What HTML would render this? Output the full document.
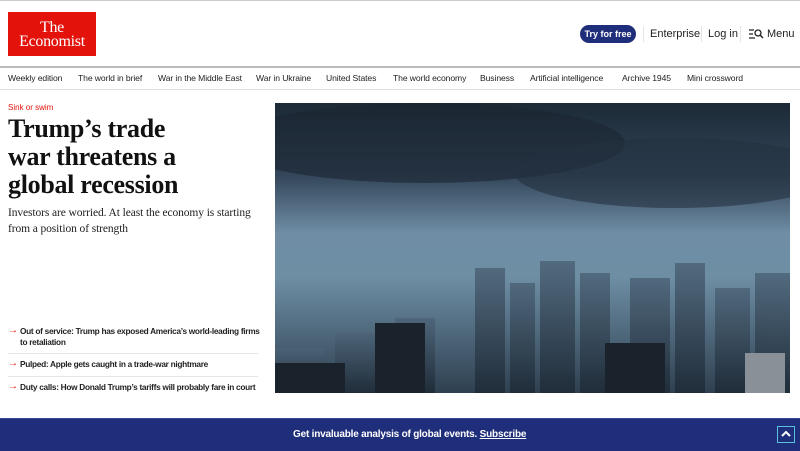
<!DOCTYPE html>
<html><head><style>
*{margin:0;padding:0;box-sizing:border-box}
body{width:800px;height:451px;overflow:hidden;background:#fff;font-family:"Liberation Sans",sans-serif;position:relative}
.top{position:absolute;top:0;left:0;width:800px;height:1px;background:#ccc}
.logo{position:absolute;left:8px;top:12px;width:88px;height:44px;background:#e3120b;color:#fff;font-family:"Liberation Serif",serif;font-size:16px;line-height:14px;text-align:center;padding-top:9px;letter-spacing:-0.3px}
.hdr{position:absolute;top:28px;font-size:11px;line-height:12px;color:#222}
.try{position:absolute;left:580px;top:25px;width:56px;height:18px;background:#1f2e7a;color:#fff;border-radius:9px;font-size:9px;font-weight:bold;text-align:center;line-height:18px}
.sep{position:absolute;top:26px;width:1px;height:16px;background:#e5e5e5}
.nav{position:absolute;top:66px;left:0;width:800px;height:24px;border-top:2px solid #bbb;border-bottom:1px solid #e0e0e0}
.nav span{position:absolute;top:5px;font-size:8.6px;color:#222;letter-spacing:-0.1px}
.kick{position:absolute;left:8px;top:103px;color:#e3120b;font-size:8px}
h1{position:absolute;left:8px;top:115px;font-family:"Liberation Serif",serif;font-weight:bold;font-size:26px;line-height:28px;color:#111;white-space:nowrap;letter-spacing:-0.3px}
.sub{position:absolute;left:8px;top:205px;width:260px;font-family:"Liberation Serif",serif;font-size:11.5px;line-height:16px;color:#222;letter-spacing:-0.1px}
.rel{position:absolute;left:8px;width:255px;font-size:8.3px;font-weight:bold;line-height:11px;color:#222;padding-left:12px;letter-spacing:-0.3px}
.rel:before{content:"→";position:absolute;left:0;top:-1px;color:#e3120b;font-weight:bold;font-size:10px}
.hr{position:absolute;left:8px;width:250px;height:1px;background:#e5e5e5}
.ban{position:absolute;left:0;top:418px;width:800px;height:33px;background:#1f2e7a;border-top:1px solid #3a4a9a}
.ban p{position:absolute;left:293px;top:10px;color:#fff;font-size:10px;font-weight:bold;letter-spacing:-0.2px}
.up{position:absolute;left:777px;top:7px;width:18px;height:17px;border:1px solid #5bc0de}
</style></head><body>
<div class="top"></div>
<div class="logo">The<br>Economist</div>
<div class="try">Try for free</div>
<div class="sep" style="left:643px"></div>
<div class="hdr" style="left:650px">Enterprise</div>
<div class="sep" style="left:701px"></div>
<div class="hdr" style="left:708px">Log in</div>
<div class="sep" style="left:740px"></div>
<svg style="position:absolute;left:748px;top:28px" width="16" height="12" viewBox="0 0 16 12"><path d="M1 2h5M1 6h4M1 10h6" stroke="#222" stroke-width="1.2"/><circle cx="10" cy="5" r="3" fill="none" stroke="#222" stroke-width="1.3"/><path d="M12 7l3 3" stroke="#222" stroke-width="1.4"/></svg>
<div class="hdr" style="left:767px">Menu</div>
<div class="nav">
<span style="left:8px">Weekly edition</span><span style="left:78px">The world in brief</span><span style="left:158px">War in the Middle East</span><span style="left:256px">War in Ukraine</span><span style="left:326px">United States</span><span style="left:393px">The world economy</span><span style="left:480px">Business</span><span style="left:530px">Artificial intelligence</span><span style="left:622px">Archive 1945</span><span style="left:687px">Mini crossword</span>
</div>
<div class="kick">Sink or swim</div>
<h1>Trump’s trade<br>war threatens a<br>global recession</h1>
<div class="sub">Investors are worried. At least the economy is starting from a position of strength</div>
<div class="rel" style="top:326px">Out of service: Trump has exposed America’s world-leading firms to retaliation</div>
<div class="hr" style="top:353px"></div>
<div class="rel" style="top:359px;white-space:nowrap">Pulped: Apple gets caught in a trade-war nightmare</div>
<div class="hr" style="top:376px"></div>
<div class="rel" style="top:382px;white-space:nowrap">Duty calls: How Donald Trump’s tariffs will probably fare in court</div>
<svg style="position:absolute;left:275px;top:103px" width="515" height="290" viewBox="0 0 515 290">
<defs><linearGradient id="s" x1="0" y1="0" x2="0" y2="1"><stop offset="0" stop-color="#1c2a36"/><stop offset=".25" stop-color="#34465a"/><stop offset=".45" stop-color="#6f8ea6"/><stop offset=".6" stop-color="#6e8ea4"/><stop offset="1" stop-color="#2e4050"/></linearGradient>
<linearGradient id="b" x1="0" y1="0" x2="0" y2="1"><stop offset="0" stop-color="#4d6478"/><stop offset="1" stop-color="#1e2a36"/></linearGradient></defs>
<rect width="515" height="290" fill="url(#s)"/>
<ellipse cx="150" cy="40" rx="200" ry="40" fill="#1a2530" opacity=".6"/>
<ellipse cx="400" cy="70" rx="160" ry="35" fill="#233140" opacity=".6"/>
<g fill="url(#b)" opacity=".85">
<rect x="200" y="165" width="30" height="125"/><rect x="235" y="180" width="25" height="110"/><rect x="265" y="158" width="35" height="132"/><rect x="305" y="170" width="30" height="120"/><rect x="355" y="175" width="40" height="115"/><rect x="400" y="160" width="30" height="130"/><rect x="440" y="185" width="35" height="105"/><rect x="480" y="170" width="35" height="120"/><rect x="120" y="215" width="40" height="75"/><rect x="60" y="230" width="45" height="60"/><rect x="0" y="245" width="50" height="45"/>
</g>
<g fill="#1a222c"><rect x="100" y="220" width="50" height="70"/><rect x="0" y="260" width="70" height="30"/><rect x="330" y="240" width="60" height="50"/></g>
<rect x="470" y="250" width="40" height="40" fill="#8a9098"/>
</svg>
<div class="ban"><p>Get invaluable analysis of global events. <u>Subscribe</u></p>
<div class="up"><svg width="16" height="15" viewBox="0 0 16 15"><path d="M4 9l4-4 4 4" stroke="#fff" stroke-width="2" fill="none"/></svg></div></div>
</body></html>
